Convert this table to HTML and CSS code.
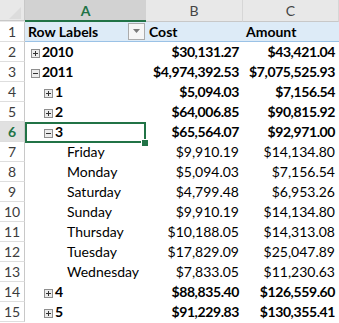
FILE: index.html
```html
<!DOCTYPE html>
<html lang="en">
<head>
<meta charset="UTF-8">
<title>Pivot Table</title>
<link rel="stylesheet" href="styles.css">
</head>
<body>

<div class="sheet">
  <!-- Column letters -->
  <div class="row col-head">
    <div class="corner">
      <svg width="25" height="22" viewBox="0 0 25 22"><polygon points="21,7 21,19 9,19" fill="#dcdcdc"/></svg>
    </div>
    <div class="ch selected">A</div>
    <div class="ch">B</div>
    <div class="ch">C</div>
  </div>

  <!-- Pivot header -->
  <div class="row pivot-head">
    <div class="rh">1</div>
    <div class="cell label">Row Labels
      <span class="dropdown">
        <svg width="9" height="5" viewBox="0 0 9 5"><polygon points="1,0 8,0 4.5,4" fill="#7a7a7a"/></svg>
      </span>
    </div>
    <div class="cell">Cost</div>
    <div class="cell">Amount</div>
  </div>

  <div class="row bold">
    <div class="rh">2</div>
    <div class="cell level0"><span class="toggle plus"></span>2010</div>
    <div class="cell num">$30,131.27</div>
    <div class="cell num">$43,421.04</div>
  </div>
  <div class="row bold">
    <div class="rh">3</div>
    <div class="cell level0"><span class="toggle minus"></span>2011</div>
    <div class="cell num">$4,974,392.53</div>
    <div class="cell num">$7,075,525.93</div>
  </div>
  <div class="row bold">
    <div class="rh">4</div>
    <div class="cell level1"><span class="toggle plus"></span>1</div>
    <div class="cell num">$5,094.03</div>
    <div class="cell num">$7,156.54</div>
  </div>
  <div class="row bold">
    <div class="rh">5</div>
    <div class="cell level1"><span class="toggle plus"></span>2</div>
    <div class="cell num">$64,006.85</div>
    <div class="cell num">$90,815.92</div>
  </div>
  <div class="row bold">
    <div class="rh active-row">6</div>
    <div class="cell level1 active"><span class="toggle minus"></span>3</div>
    <div class="cell num">$65,564.07</div>
    <div class="cell num">$92,971.00</div>
  </div>
  <div class="row">
    <div class="rh">7</div>
    <div class="cell level2">Friday</div>
    <div class="cell num">$9,910.19</div>
    <div class="cell num">$14,134.80</div>
  </div>
  <div class="row">
    <div class="rh">8</div>
    <div class="cell level2">Monday</div>
    <div class="cell num">$5,094.03</div>
    <div class="cell num">$7,156.54</div>
  </div>
  <div class="row">
    <div class="rh">9</div>
    <div class="cell level2">Saturday</div>
    <div class="cell num">$4,799.48</div>
    <div class="cell num">$6,953.26</div>
  </div>
  <div class="row">
    <div class="rh">10</div>
    <div class="cell level2">Sunday</div>
    <div class="cell num">$9,910.19</div>
    <div class="cell num">$14,134.80</div>
  </div>
  <div class="row">
    <div class="rh">11</div>
    <div class="cell level2">Thursday</div>
    <div class="cell num">$10,188.05</div>
    <div class="cell num">$14,313.08</div>
  </div>
  <div class="row">
    <div class="rh">12</div>
    <div class="cell level2">Tuesday</div>
    <div class="cell num">$17,829.09</div>
    <div class="cell num">$25,047.89</div>
  </div>
  <div class="row">
    <div class="rh">13</div>
    <div class="cell level2">Wednesday</div>
    <div class="cell num">$7,833.05</div>
    <div class="cell num">$11,230.63</div>
  </div>
  <div class="row bold">
    <div class="rh">14</div>
    <div class="cell level1"><span class="toggle plus"></span>4</div>
    <div class="cell num">$88,835.40</div>
    <div class="cell num">$126,559.60</div>
  </div>
  <div class="row bold">
    <div class="rh">15</div>
    <div class="cell level1"><span class="toggle plus"></span>5</div>
    <div class="cell num">$91,229.83</div>
    <div class="cell num">$130,355.41</div>
  </div>
</div>

</body>
</html>
```

FILE: styles.css
```css
body {
  margin: 0;
  padding: 0;
  background: #fff;
  font-family: Lato, "Liberation Sans", sans-serif;
  font-size: 14px;
  color: #000;
}
.sheet {
  width: 339px;
}
.row {
  display: grid;
  grid-template-columns: 25px 121px 97px 96px;
  height: 20px;
  line-height: 20px;
}
.bold .cell {
  font-weight: bold;
  letter-spacing: -0.4px;
}

/* column letters */
.col-head {
  height: 22px;
  line-height: 21px;
  background: #e8e8e8;
}
.corner {
  height: 21px;
  border-bottom: 1px solid #c8c8c8;
  border-right: 1px solid #c8c8c8;
  box-sizing: border-box;
}
.corner svg {
  display: block;
}
.ch {
  text-align: center;
  color: #444;
  border-bottom: 1px solid #c8c8c8;
  border-right: 1px solid #d6d6d6;
  box-sizing: border-box;
  height: 22px;
}
.ch.selected {
  background: #d2d2d2;
  color: #217346;
  font-weight: bold;
  border-bottom: 2px solid #217346;
  border-right: none;
}

/* row numbers */
.rh {
  text-align: center;
  color: #3c3c3c;
  border-right: 1px solid #c8c8c8;
  border-bottom: 1px solid #dedede;
  box-sizing: border-box;
  height: 20px;
}
.rh.active-row {
  background: #e1e1e1;
  color: #217346;
  font-weight: bold;
}

/* cells */
.cell {
  padding: 0 3px;
  white-space: nowrap;
  overflow: visible;
}
.num {
  text-align: right;
  padding-right: 4px;
}
.pivot-head .cell {
  background: #ddebf7;
  border-bottom: 1px solid #9bc2e6;
  font-weight: bold;
  height: 20px;
  box-sizing: border-box;
  line-height: 20px;
}
.label {
  display: flex;
  justify-content: space-between;
  align-items: center;
  padding-right: 1px;
}
.dropdown {
  width: 15px;
  height: 15px;
  border: 1px solid #ababab;
  background: #f6f6f6;
  display: flex;
  align-items: center;
  justify-content: center;
}
.dropdown svg {
  display: block;
}

.level0 {
  padding-left: 6px;
}
.level1 {
  padding-left: 19px;
}
.level2 {
  padding-left: 42px;
  font-weight: normal;
}

/* expand / collapse buttons */
.toggle {
  display: inline-block;
  position: relative;
  width: 7px;
  height: 7px;
  border: 1px solid #8e8e8e;
  background: #ececec;
  margin-right: 2px;
  vertical-align: -1px;
}
.toggle::before {
  content: "";
  position: absolute;
  left: 1px;
  top: 3px;
  width: 5px;
  height: 1px;
  background: #333;
}
.plus::after {
  content: "";
  position: absolute;
  left: 3px;
  top: 1px;
  width: 1px;
  height: 5px;
  background: #333;
}

/* active cell */
.active {
  position: relative;
}
.active::after {
  content: "";
  position: absolute;
  left: 0;
  top: 0;
  right: 0;
  bottom: -1px;
  border: 2px solid #217346;
}
.active::before {
  content: "";
  position: absolute;
  right: -3px;
  bottom: -5px;
  width: 6px;
  height: 6px;
  background: #217346;
  border: 1px solid #fff;
  z-index: 1;
}
```
